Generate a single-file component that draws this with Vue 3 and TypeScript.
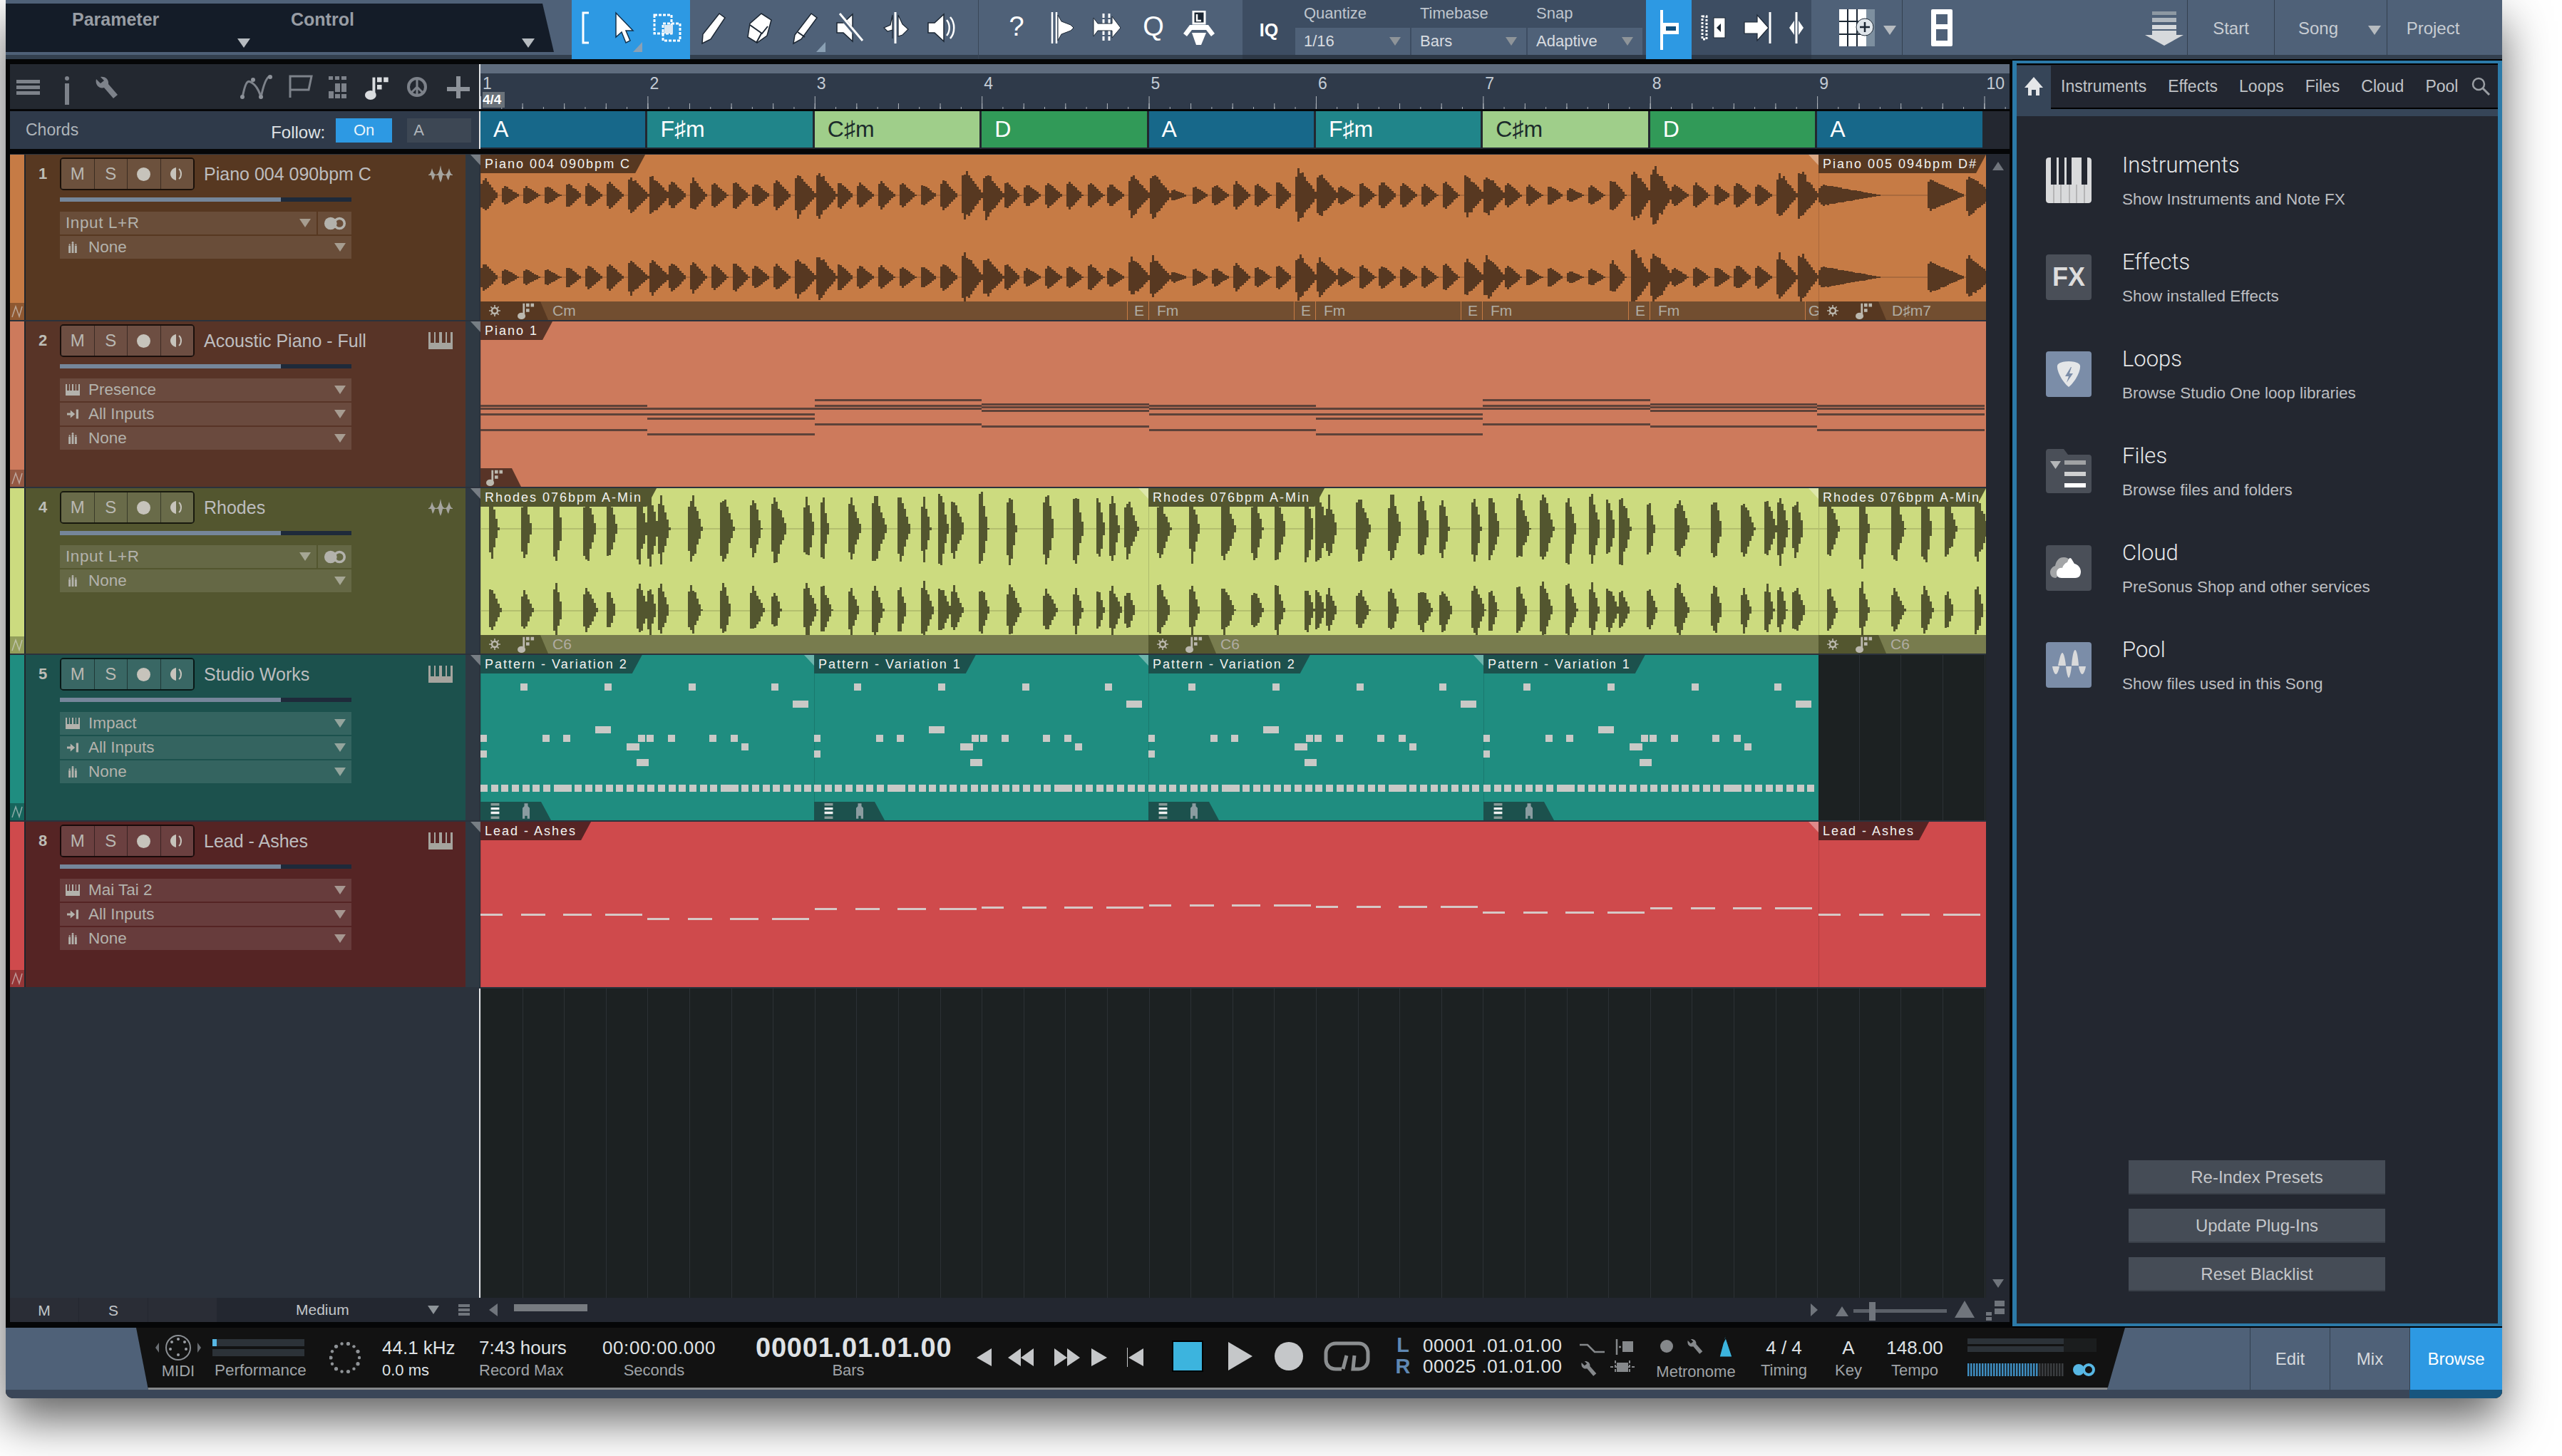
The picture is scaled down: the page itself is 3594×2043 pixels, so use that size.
<template>
  <div class="page">
    <svg class="defs" width="0" height="0">
      <symbol id="ic-wave" viewBox="0 0 34 24">
        <path d="M0 13Q3 13 5 4Q7 13 11 13Q15 13 17 0Q19 13 23 13Q27 13 29 4Q31 13 34 13V14H30Q29 18 28 21Q26 18 25 14H20Q19 20 17 24Q15 20 14 14H9Q8 18 6 21Q5 18 4 14H0z" fill="currentColor" />
      </symbol>
      <symbol id="ic-keys" viewBox="0 0 34 24">
        <path d="M0 0h3v15h5V0h2v15h5V0h4v15h5V0h2v15h5V0h3v24H0z" fill="currentColor" />
      </symbol>
      <symbol id="ic-keys-sm" viewBox="0 0 20 16">
        <path d="M0 0h2v9h3V0h1v9h3V0h2v9h3V0h1v9h3V0h2v16H0z" fill="currentColor" />
      </symbol>
      <symbol id="ic-input" viewBox="0 0 20 20">
        <path d="M0 8h6V3l8 7-8 7v-5H0zM16 2h4v16h-4z" fill="currentColor" />
      </symbol>
      <symbol id="ic-stand" viewBox="0 0 16 22">
        <path d="M6 4h4v18H6zM0 8h4v14H0zM12 8h4v14h-4z" fill="currentColor" />
        <circle cx="8" cy="2" r="2" fill="currentColor" />
        <circle cx="2" cy="6" r="1.5" fill="currentColor" />
        <circle cx="14" cy="6" r="1.5" fill="currentColor" />
      </symbol>
      <symbol id="ic-gear" viewBox="0 0 20 20">
        <circle cx="10" cy="10" r="5" fill="none" stroke="currentColor" stroke-width="3" />
        <path d="M10 0v4M10 16v4M0 10h4M16 10h4M3 3l3 3M14 14l3 3M17 3l-3 3M6 14l-3 3" stroke="currentColor" stroke-width="2" />
      </symbol>
      <symbol id="ic-notefx" viewBox="0 0 26 26">
        <path d="M8 2h3v18H8z" fill="currentColor" />
        <ellipse cx="6" cy="21" rx="6" ry="5" fill="currentColor" />
        <path d="M13 2h5v5h-5zM20 2h5v5h-5zM13 10h5v5h-5z" fill="currentColor" />
      </symbol>
      <symbol id="ic-lines" viewBox="0 0 14 26">
        <path d="M0 0h14v4H0z" fill="#8a9a98" />
        <path d="M0 7h14v4H0zM0 14h14v4H0z" fill="#f0f0f0" />
        <path d="M0 22h14v4H0z" fill="#8a9a98" />
      </symbol>
      <symbol id="ic-ghost" viewBox="0 0 12 26">
        <path d="M0 8l3-3V0h6v5l3 3v18H8v-5H4v5H0z" fill="#8a9ca0" />
      </symbol>
      <symbol id="ic-wrench" viewBox="0 -1 32 31">
        <path d="M1 3l6 6 5-4-5-5c6-1 12 3 11 10l13 15-6 5-13-15C5 17-1 11 1 3z" fill="currentColor" />
      </symbol>
    </svg>

    <div class="window">
      <!-- top toolbar -->
      <div class="toolbar">
        <div class="param-wrap">
          <div class="param">
            <div class="param-col first">
              <span>Parameter</span><i class="tri" />
            </div>
            <div class="param-col second">
              <span>Control</span><i class="tri" />
            </div>
          </div>
        </div>

        <div class="tools-blue">
          <span class="tool t-40">
            <svg viewBox="0 0 24 48"><path d="M16 3H8v42h8" fill="none" stroke="#fff" stroke-width="3" /></svg>
          </span>
          <span class="tool t-62">
            <svg viewBox="0 0 48 48"><path d="M15 3v34l8-7 6 15 6-3-6-14h10z" fill="#fff" stroke="#12324e" stroke-width="1.5" /></svg>
            <i class="corner" />
          </span>
          <span class="tool t-65">
            <svg viewBox="0 0 48 48">
              <rect x="6" y="6" width="24" height="26" fill="none" stroke="#fff" stroke-width="3" stroke-dasharray="4 2" />
              <rect x="18" y="18" width="24" height="24" fill="none" stroke="#fff" stroke-width="3" stroke-dasharray="4 2" />
              <rect x="20" y="20" width="12" height="12" fill="#d8e8f4" />
            </svg>
          </span>
        </div>

        <div class="tools-light first-group">
          <span class="tool">
            <svg viewBox="0 0 48 48"><path d="M33 4l8 6-20 30-12 6 1-13z" fill="#fff" stroke="#1b2633" stroke-width="1.5" /></svg>
          </span>
          <span class="tool">
            <svg viewBox="0 0 48 48">
              <path d="M28 4l14 9-6 22-14 10-13-8 3-19z" fill="#fff" stroke="#1b2633" stroke-width="1.5" />
              <path d="M12 20l17 12 8-10M21 45l7-13" fill="none" stroke="#1b2633" stroke-width="2" />
            </svg>
          </span>
          <span class="tool">
            <svg viewBox="0 0 48 48">
              <path d="M34 4l8 6-22 30-11 6 2-12z" fill="#fff" stroke="#1b2633" stroke-width="1.5" />
              <path d="M15 30l10 7" stroke="#1b2633" stroke-width="2" />
            </svg>
            <i class="corner" />
          </span>
          <span class="tool">
            <svg viewBox="0 0 48 48">
              <path d="M6 17h9L28 5v38L15 31H6z" fill="#fff" stroke="#1b2633" stroke-width="1.5" />
              <path d="M8 4l34 40" stroke="#4f6178" stroke-width="6" />
              <path d="M10 4l32 38" stroke="#fff" stroke-width="3" />
            </svg>
          </span>
          <span class="tool">
            <svg viewBox="0 0 48 48">
              <path d="M24 2v44" stroke="#fff" stroke-width="3" />
              <path d="M20 6l-3 14-9 4 5 5 7-2v12zM28 6l6 13 8 7-8 8-6 2z" fill="#fff" stroke="#1b2633" stroke-width="1.2" />
            </svg>
          </span>
          <span class="tool">
            <svg viewBox="0 0 48 48">
              <path d="M6 17h9L28 5v38L15 31H6z" fill="#fff" stroke="#1b2633" stroke-width="1.5" />
              <path d="M32 13c5 6 5 16 0 22M37 9c7 8 7 22 0 30" fill="none" stroke="#fff" stroke-width="2.5" />
            </svg>
          </span>
        </div>

        <div class="tools-light second-group">
          <span class="tool text-tool">?</span>
          <span class="tool">
            <svg viewBox="0 0 48 48">
              <path d="M10 2v44M16 2v44" stroke="#fff" stroke-width="2.5" />
              <path d="M18 6l5 9 13 5 4 4-4 4-13 5-5 9z" fill="#fff" stroke="#1b2633" stroke-width="1" />
            </svg>
          </span>
          <span class="tool">
            <svg viewBox="0 0 48 48">
              <path d="M18 4v40M26 4v40" stroke="#fff" stroke-width="3" stroke-dasharray="6 2" />
              <path d="M4 10l6 8h20V8l12 16-12 14V28H10l-6 8z" fill="#fff" stroke="#1b2633" stroke-width="1" />
            </svg>
          </span>
          <span class="tool text-tool q">Q</span>
          <span class="tool">
            <svg viewBox="0 0 48 48">
              <rect x="16" y="1" width="16" height="17" fill="#1b2633" stroke="#fff" stroke-width="3" />
              <path d="M21 5v9h6" fill="none" stroke="#fff" stroke-width="2.5" />
              <path d="M2 32l9-12h26l9 12-5 4-7-9H14l-7 9z" fill="#fff" />
              <path d="M14 31h20l-7 17h-7z" fill="#fff" />
            </svg>
          </span>
        </div>

        <div class="tools-dark">
          <span class="iq">IQ</span>
          <div v-for="q in quantize" :key="q.label" class="qs-col">
            <div class="qs-label">{{ q.label }}</div>
            <div class="qs-select">
              <span>{{ q.value }}</span><i class="tri sm" />
            </div>
          </div>
          <span class="snap-btn">
            <svg viewBox="0 0 40 60">
              <path d="M10 2v56" stroke="#fff" stroke-width="4" />
              <rect x="12" y="20" width="22" height="16" fill="#fff" />
              <rect x="16" y="25" width="14" height="6" fill="#12507e" />
            </svg>
          </span>
          <span class="tool t-62 after-snap">
            <svg viewBox="0 0 48 48">
              <path d="M8 8h6v32H8z" fill="none" stroke="#fff" stroke-width="3" stroke-dasharray="3 2" />
              <rect x="24" y="10" width="16" height="28" fill="#fff" stroke="#1b2633" />
              <path d="M34 18l-6 6 6 6z" fill="#1b2633" />
            </svg>
          </span>
          <span class="tool t-66">
            <svg viewBox="0 0 48 48">
              <path d="M4 16h18V6l16 18-16 18V32H4z" fill="#fff" stroke="#1b2633" stroke-width="1.2" />
              <path d="M40 2v44" stroke="#fff" stroke-width="3" />
            </svg>
          </span>
          <span class="tool t-40">
            <svg viewBox="0 0 24 48">
              <path d="M12 2v44" stroke="#fff" stroke-width="3" />
              <path d="M9 14L2 24l7 10zM15 14l7 10-7 10z" fill="#fff" />
            </svg>
          </span>
        </div>

        <div class="tools-right">
          <span class="tool layout-btn">
            <svg viewBox="0 0 56 56">
              <path d="M2 2h38v52H2z" fill="#fff" />
              <path d="M14 2v52M27 2v52M2 19h38M2 37h38" stroke="#1b2633" stroke-width="2" />
              <path d="M40 2h12v52H40z" fill="#7d8f9f" />
              <circle cx="38" cy="27" r="12" fill="#dfe5ea" stroke="#1b2633" />
              <path d="M38 20v14M31 27h14" stroke="#1b2633" stroke-width="2.5" />
            </svg>
          </span>
          <i class="tri layout-tri" />
          <span class="sep" />
          <span class="tool chan-btn">
            <svg viewBox="0 0 34 56">
              <rect x="2" y="2" width="30" height="52" rx="2" fill="#fff" />
              <rect x="9" y="9" width="16" height="14" fill="#4f6178" />
              <rect x="9" y="30" width="16" height="16" fill="#4f6178" />
            </svg>
          </span>
          <span class="tool dl-btn">
            <svg viewBox="0 0 54 50">
              <path d="M10 2h34v5H10z" fill="#8d98a3" />
              <path d="M10 11h34v6H10z" fill="#aeb6be" />
              <path d="M10 21h34v6H10zM10 29h34v6h10L27 50 0 35h10z" fill="#d6d9dc" />
            </svg>
          </span>
          <span class="sep" />
          <span class="nav-text start">Start</span>
          <span class="sep" />
          <span class="nav-text song">Song</span><i class="tri song-tri" />
          <span class="sep" />
          <span class="nav-text project">Project</span>
        </div>
      </div>

      <div class="workspace">
        <!-- arrangement -->
        <div class="arrange">
          <div class="arr-head">
            <div class="head-tools">
              <svg class="head-icons" viewBox="0 0 658 63">
                <g fill="#7d828a">
                  <rect x="9" y="22" width="33" height="5" />
                  <rect x="9" y="30" width="33" height="5" />
                  <rect x="9" y="38" width="33" height="5" />
                  <rect x="77" y="27" width="6" height="30" />
                  <circle cx="80" cy="20" r="3" />
                </g>
                <use href="#ic-wrench" x="120" y="17" width="32" height="31" color="#7d828a" />
                <path d="M326 47c5-26 8-26 17-18 4 4 8 12 9 18 4-20 8-28 12-30" fill="none" stroke="#7d828a" stroke-width="3" />
                <g fill="#8d9299"><circle cx="326" cy="46" r="3" /><circle cx="341" cy="22" r="3" /><circle cx="352" cy="46" r="3" /><circle cx="365" cy="18" r="3" /></g>
                <path d="M393 47V17h30l-4 19h-26" fill="none" stroke="#7d828a" stroke-width="3" />
                <path d="M447 17h6v5h-6zM456 17h6v5h-6zM465 17h7v5h-7zM456 27h7v12h-7zM465 27h7v12h-7zM447 38h7v10h-7zM456 42h7v6h-7zM465 42h7v6h-7z" fill="#7d828a" />
                <use href="#ic-notefx" x="498" y="16" width="34" height="34" color="#d9dcdf" />
                <circle cx="571" cy="32" r="12" fill="none" stroke="#7d828a" stroke-width="4" />
                <path d="M571 20v24M571 32l-8 8M571 32l8 8" stroke="#7d828a" stroke-width="3" />
                <path d="M626 17h6v15h13v6h-13v10h-6V38h-13v-6h13z" fill="#8d9299" />
              </svg>
            </div>
            <div class="ruler">
              <div class="ruler-strip" />
              <div class="ruler-body">
                <span class="timesig">4/4</span>
                <span v-for="n in 10" :key="n" class="bar-num">{{ n }}</span>
              </div>
            </div>
          </div>

          <div class="chord-row">
            <div class="chord-label">
              <span class="chords-title">Chords</span>
              <span class="follow">Follow:</span>
              <span class="on-btn">On</span>
              <span class="a-btn">A</span>
            </div>
            <div class="chord-lane">
              <div
                v-for="(c, i) in chords"
                :key="i"
                class="chord"
                :style="{ background: chordColors[c].bg, color: chordColors[c].fg }"
              >
                {{ c }}
              </div>
            </div>
          </div>

          <div class="track-area">
            <div v-for="t in tracks" :key="t.num" class="track-row">
              <div class="track-head" :style="{ background: t.body }">
                <div class="strip" :style="{ background: t.color }">
                  <span class="auto-btn">
                    <svg viewBox="0 0 20 24"><path d="M3 20L8 5l5 14 4-14" fill="none" stroke="#d8d8d8" stroke-opacity=".6" stroke-width="1.5" /></svg>
                  </span>
                </div>
                <div class="track-main">
                  <div class="track-top">
                    <span class="track-num">{{ t.num }}</span>
                    <div class="msrm">
                      <span class="msr-btn">M</span>
                      <span class="msr-btn">S</span>
                      <span class="msr-btn"><i class="rec-dot" /></span>
                      <span class="msr-btn">
                        <svg viewBox="0 0 20 20" class="mon"><path d="M9 1C4 2 1 6 1 10s3 8 8 9z" fill="currentColor" /><path d="M13 3c4 3 4 11 0 14" fill="none" stroke="currentColor" stroke-width="2" /></svg>
                      </span>
                    </div>
                    <span class="track-name">{{ t.name }}</span>
                    <svg class="track-type"><use :href="t.audio ? '#ic-wave' : '#ic-keys'" /></svg>
                  </div>
                  <div class="fader"><div class="fader-fill" /></div>
                  <div class="selects">
                    <div v-for="s in t.selects" :key="s.label" class="select-row">
                      <div class="select" :class="{ toggled: s.toggle }">
                        <svg v-if="s.icon" class="sel-icon"><use :href="s.icon" /></svg>
                        <span class="sel-text" :class="{ noicon: !s.icon }">{{ s.label }}</span>
                        <i class="tri sm" />
                      </div>
                      <div v-if="s.toggle" class="sel-toggle">
                        <svg viewBox="0 0 36 26"><circle cx="11" cy="13" r="10" fill="currentColor" /><circle cx="25" cy="13" r="8" fill="none" stroke="currentColor" stroke-width="4" /></svg>
                      </div>
                    </div>
                  </div>
                </div>
                <div class="track-side" />
              </div>

              <div class="lane">
                <div
                  v-for="(c, i) in t.clips"
                  :key="i"
                  class="clip"
                  :style="{ left: c.x + 'px', width: c.w + 'px', background: t.color }"
                >
                  <i class="clip-fade" />
                  <svg v-if="c.wave" class="clip-wave" :viewBox="`0 0 ${c.w} 232`" :width="c.w" height="232">
                    <rect x="0" y="56" :width="c.w" height="2" :fill="t.waveBase" />
                    <rect x="0" y="171" :width="c.w" height="2" :fill="t.waveBase" />
                    <path :d="c.wave" :fill="t.body" />
                  </svg>
                  <i
                    v-for="(n, k) in c.notes"
                    :key="k"
                    class="note"
                    :style="{ left: n.x + 'px', top: n.y + 'px', width: n.w + 'px', height: n.h + 'px', background: t.noteColor }"
                  />
                  <div v-if="c.label" class="clip-label" :style="{ background: t.body }">{{ c.label }}</div>
                  <div v-if="c.footBar" class="foot-bar" :style="{ background: t.foot }">
                    <template v-for="(m, k) in c.marks" :key="k">
                      <i v-if="m.line" class="foot-line" :style="{ left: m.x + 'px', background: t.color }" />
                      <span v-else class="foot-text" :style="{ left: m.x + 'px' }">{{ m.text }}</span>
                    </template>
                  </div>
                  <div v-if="c.footTab" class="foot-tab" :class="c.footTab" :style="{ background: t.body }">
                    <template v-if="c.footTab === 'gear'">
                      <svg class="ft-gear"><use href="#ic-gear" /></svg>
                      <svg class="ft-note"><use href="#ic-notefx" /></svg>
                    </template>
                    <svg v-else-if="c.footTab === 'note'" class="ft-note"><use href="#ic-notefx" /></svg>
                    <template v-else>
                      <svg class="ft-lines"><use href="#ic-lines" /></svg>
                      <svg class="ft-ghost"><use href="#ic-ghost" /></svg>
                    </template>
                  </div>
                </div>
              </div>
            </div>

            <div class="empty-row">
              <div class="empty-left" />
              <div class="empty-lane" />
            </div>

            <i class="scroll-up" />
            <i class="scroll-down" />
          </div>

          <div class="arr-foot">
            <div class="foot-left">
              <span class="foot-cell">M</span>
              <span class="foot-cell">S</span>
              <span class="foot-cell" />
              <span class="medium">Medium</span>
              <i class="tri sm medium-tri" />
              <span class="stack"><i /><i /><i /></span>
            </div>
            <div class="foot-right">
              <i class="left-tri" />
              <span class="thumb" />
              <i class="right-tri" />
              <svg class="zoom-widget" viewBox="0 0 252 34">
                <path d="M8 26l9-14 9 14z" fill="#70757c" />
                <rect x="33" y="16" width="131" height="5" fill="#5b6068" />
                <rect x="55" y="6" width="9" height="26" fill="#70757c" />
                <path d="M175 28l14-24 14 24z" fill="#70757c" />
                <rect x="231" y="4" width="14" height="8" fill="#70757c" />
                <rect x="231" y="15" width="14" height="8" fill="#70757c" />
                <rect x="219" y="20" width="8" height="5" fill="#70757c" />
                <rect x="219" y="27" width="8" height="5" fill="#70757c" />
              </svg>
            </div>
          </div>
        </div>

        <!-- browser panel -->
        <div class="browser">
          <div class="br-tabs">
            <span class="br-home">
              <svg viewBox="0 0 26 26"><path d="M13 0l13 15h-5v11h-5v-8h-6v8H5V15H0z" fill="#e4e6e8" /></svg>
            </span>
            <div class="br-tab-row">
              <span v-for="tab in browserTabs" :key="tab" class="br-tab">{{ tab }}</span>
              <svg class="br-search" viewBox="0 0 28 26">
                <circle cx="11" cy="10" r="8" fill="none" stroke="#9a9ea3" stroke-width="2.5" />
                <path d="M17 16l9 9" stroke="#9a9ea3" stroke-width="3" />
              </svg>
            </div>
          </div>

          <div class="br-list">
            <div v-for="item in browserItems" :key="item.title" class="br-item">
              <div class="br-icon" :class="item.kind">
                <template v-if="item.kind === 'keys'">
                  <svg viewBox="0 0 64 64">
                    <rect width="64" height="64" rx="4" fill="#d9dadb" />
                    <path d="M11 38v26M21 38v26M33 38v26M43 38v26M54 38v26" stroke="#a8a9aa" stroke-width="1.5" />
                    <path d="M7 0h8v38H7zM18 0h8v38h-8zM29 0h7v38h-7zM50 0h8v38h-8z" fill="#232730" />
                  </svg>
                </template>
                <template v-else-if="item.kind === 'fx'">FX</template>
                <template v-else-if="item.kind === 'loops'">
                  <svg viewBox="0 0 64 64">
                    <path d="M32 14c-8 0-15 2-16 6-1 10 10 26 16 30 6-4 17-20 16-30-1-4-8-6-16-6z" fill="#e4e6e8" />
                    <path d="M35 22l-8 13h5l-3 9 9-13h-5l3-9z" fill="#7b8da8" />
                  </svg>
                </template>
                <template v-else-if="item.kind === 'files'">
                  <svg viewBox="0 0 64 62">
                    <path d="M4 0h21l6 8h29a4 4 0 0 1 4 4v46a4 4 0 0 1-4 4H4a4 4 0 0 1-4-4V4a4 4 0 0 1 4-4z" fill="#4a4f58" />
                    <path d="M6 17h15l-7.5 11z" fill="#b4b6b8" />
                    <rect x="26" y="16" width="30" height="6" fill="#a0a2a4" />
                    <rect x="26" y="32" width="30" height="6" fill="#cfd0d1" />
                    <rect x="26" y="48" width="30" height="6" fill="#fff" />
                  </svg>
                </template>
                <template v-else-if="item.kind === 'cloud'">
                  <svg viewBox="0 0 64 64">
                    <path d="M14 46c-6 0-8-4-8-8s3-8 7-9c1-6 5-13 13-12 5 0 8 4 9 8z" fill="#a3a5a7" />
                    <path d="M22 46c-5 0-7-3-7-7 0-5 4-8 8-7 1-4 4-7 7-8 1-2 2-6 4-6s4 5 6 8c5 1 9 6 9 11s-2 9-8 9z" fill="#fff" />
                  </svg>
                </template>
                <template v-else>
                  <svg viewBox="0 0 64 64">
                    <path d="M17 33c2-10 4-18 6-18s4 8 5 18z" fill="#d9dadb" />
                    <path d="M36 33c1-14 3-22 5-22s4 8 5 22z" fill="#d9dadb" />
                    <path d="M9 34c1 6 3 11 5 11s4-5 5-11zM28 34c1 10 3 16 4 16s3-6 4-16zM46 34c1 6 3 11 5 11s4-5 5-11z" fill="#d9dadb" />
                  </svg>
                </template>
              </div>
              <div class="br-text">
                <div class="br-title">{{ item.title }}</div>
                <div class="br-desc">{{ item.desc }}</div>
              </div>
            </div>
          </div>

          <div class="br-buttons">
            <button v-for="b in browserButtons" :key="b" class="br-btn">{{ b }}</button>
          </div>
        </div>
      </div>

      <!-- transport -->
      <div class="transport">
        <div class="tp-black">
          <div class="tp midi">
            <svg viewBox="0 0 64 52" class="midi-ic">
              <path d="M0 28l5-7v14zM64 28l-5-7v14z" fill="#6b6f74" />
              <circle cx="32" cy="28" r="17" fill="none" stroke="#8a8e93" stroke-width="2" />
              <g fill="#9a9ea3"><circle cx="32" cy="16" r="2" /><circle cx="23" cy="20" r="2" /><circle cx="41" cy="20" r="2" /><circle cx="21" cy="30" r="2" /><circle cx="43" cy="30" r="2" /><circle cx="32" cy="38" r="2" /></g>
            </svg>
            <div class="lab">MIDI</div>
          </div>
          <div class="tp perf">
            <div class="perf-bars">
              <div class="perf-bar first"><i /></div>
              <div class="perf-bar" />
            </div>
            <div class="lab">Performance</div>
          </div>
          <svg class="tp spinner" viewBox="0 0 44 44">
            <circle v-for="(d, i) in spinnerDots" :key="i" :cx="d.x" :cy="d.y" :r="d.r" fill="#8e9296" />
          </svg>
          <div class="tp sr">
            <div class="val">44.1 kHz</div>
            <div class="lab bright">0.0 ms</div>
          </div>
          <div class="tp rec">
            <div class="val">7:43 hours</div>
            <div class="lab">Record Max</div>
          </div>
          <div class="tp sec">
            <div class="val">00:00:00.000</div>
            <div class="lab center">Seconds</div>
          </div>
          <div class="tp bars">
            <div class="val big">00001.01.01.00</div>
            <div class="lab center">Bars</div>
          </div>

          <svg class="tp controls" viewBox="0 0 590 84">
            <g fill="#c5c7c9">
              <path d="M10 42l21-13v25z" />
              <path d="M54 42l18-13v25zM72 42l18-13v25z" />
              <path d="M119 29l18 13-18 12zM137 29l18 13-18 12z" />
              <path d="M171 29l22 13-22 12z" />
              <rect x="221" y="28" width="1" height="27" />
              <path d="M223 42l21-13v25z" />
              <path d="M363 20l34 20-34 20z" />
              <circle cx="448" cy="40" r="20" />
            </g>
            <rect x="285" y="19" width="42" height="42" fill="#3cb4de" stroke="#000" stroke-width="2" />
            <path d="M522 58h-8c-9 0-14-6-14-13v-9c0-8 6-14 14-14h32c8 0 13 6 13 14v9c0 7-5 13-13 13h-8l2-19M524 58l5-19" fill="none" stroke="#8b8e90" stroke-width="5" />
          </svg>
          <div class="tp lr">
            <span class="lr-l">L</span>
            <span class="lr-r">R</span>
          </div>
          <div class="tp times">
            <span>00001 .01.01.00</span>
            <span>00025 .01.01.00</span>
          </div>
          <svg class="tp met" viewBox="0 0 225 84">
            <g fill="none" stroke="#85888b" stroke-width="2.5">
              <path d="M1 24h11l10 10h14" />
              <path d="M53 16v22M56 27h3" />
            </g>
            <rect x="61" y="19" width="15" height="15" fill="#85888b" />
            <circle cx="123" cy="26" r="9" fill="#85888b" />
            <use href="#ic-wrench" x="152" y="15" width="22" height="22" color="#85888b" />
            <use href="#ic-wrench" x="3" y="46" width="22" height="22" color="#85888b" />
            <path d="M51 46v18M71 46v18M44 55h34" stroke="#85888b" stroke-width="2" stroke-dasharray="4 2" />
            <rect x="53" y="49" width="16" height="13" fill="#85888b" />
            <path d="M205 11l-8 30h18zM195 36l12-24" fill="#3cb4de" stroke="#121212" stroke-width="1.2" />
            <text x="164" y="69" text-anchor="middle" class="met-label">Metronome</text>
          </svg>
          <div class="tp timing">
            <div class="val center">4 / 4</div>
            <div class="lab center">Timing</div>
          </div>
          <div class="tp key">
            <div class="val center">A</div>
            <div class="lab center">Key</div>
          </div>
          <div class="tp tempo">
            <div class="val center">148.00</div>
            <div class="lab center">Tempo</div>
          </div>
          <svg class="tp meters" viewBox="0 0 181 84">
            <rect x="0" y="15" width="135" height="8" fill="#2c3238" />
            <rect x="0" y="26" width="135" height="8" fill="#2c3238" />
            <rect x="135" y="15" width="46" height="19" fill="#1b1d1e" />
            <rect v-for="i in 34" :key="i" :x="(i - 1) * 4" y="50" width="2.5" height="18" :fill="i < 26 ? '#3f8ec2' : '#3a3d40'" />
            <circle cx="156" cy="59" r="8" fill="#57b7e4" />
            <circle cx="170" cy="59" r="7" fill="#121212" stroke="#57b7e4" stroke-width="4" />
          </svg>
        </div>

        <div class="tp-tabs">
          <span class="tp-tab">Edit</span>
          <span class="tp-tab">Mix</span>
          <span class="tp-tab active">Browse</span>
        </div>
      </div>
    </div>
  </div>
</template>

<script setup lang="ts">
interface Note {
  x: number
  y: number
  w: number
  h: number
}

interface Mark {
  x: number
  text?: string
  line?: boolean
}

interface Clip {
  x: number
  w: number
  label?: string
  wave?: string
  notes?: Note[]
  footBar?: boolean
  marks?: Mark[]
  footTab?: 'gear' | 'note' | 'pattern'
}

interface SelectItem {
  label: string
  icon?: string
  toggle?: boolean
}

interface Track {
  num: number
  name: string
  audio: boolean
  color: string
  body: string
  foot: string
  waveBase: string
  noteColor: string
  selects: SelectItem[]
  clips: Clip[]
}

const BAR = 234.4
const EIGHTH = BAR / 8

const quantize = [
  { label: 'Quantize', value: '1/16' },
  { label: 'Timebase', value: 'Bars' },
  { label: 'Snap', value: 'Adaptive' },
]

const chords = ['A', 'F♯m', 'C♯m', 'D', 'A', 'F♯m', 'C♯m', 'D', 'A']
const chordColors: Record<string, { bg: string; fg: string }> = {
  A: { bg: '#17688a', fg: '#fff' },
  'F♯m': { bg: '#20858a', fg: '#fff' },
  'C♯m': { bg: '#9fce8a', fg: '#1c2b2b' },
  D: { bg: '#319a58', fg: '#fff' },
}

const browserTabs = ['Instruments', 'Effects', 'Loops', 'Files', 'Cloud', 'Pool']
const browserItems = [
  { kind: 'keys', title: 'Instruments', desc: 'Show Instruments and Note FX' },
  { kind: 'fx', title: 'Effects', desc: 'Show installed Effects' },
  { kind: 'loops', title: 'Loops', desc: 'Browse Studio One loop libraries' },
  { kind: 'files', title: 'Files', desc: 'Browse files and folders' },
  { kind: 'cloud', title: 'Cloud', desc: 'PreSonus Shop and other services' },
  { kind: 'pool', title: 'Pool', desc: 'Show files used in this Song' },
]
const browserButtons = ['Re-Index Presets', 'Update Plug-Ins', 'Reset Blacklist']

const spinnerDots = Array.from({ length: 14 }, (_, i) => {
  const a = (i / 14) * Math.PI * 2
  return { x: 22 + Math.cos(a) * 20, y: 22 + Math.sin(a) * 20, r: i % 2 ? 2.6 : 2.2 }
})

function makeRng(seed: number) {
  let s = seed
  return () => {
    s = (s * 16807) % 2147483647
    return s / 2147483647
  }
}

interface Onset {
  x: number
  a: number
  len: number
}

// one channel of a blocky waveform, drawn as a stepped closed path
function channel(onsets: Onset[], width: number, center: number, seed: number): string {
  const rnd = makeRng(seed)
  const step = 3
  const top: string[] = []
  const bottom: string[] = []
  for (let x = 0; x < width; x += step) {
    let amp = 0
    for (const o of onsets) {
      const d = x - o.x
      if (d < 0) continue
      const v = d < 4 ? o.a * (0.7 + d * 0.07) : o.a * Math.max(0, 1 - (d - 4) / o.len)
      if (v > amp) amp = v
    }
    const jit = amp > 22 ? 0.82 + rnd() * 0.3 : 0.94 + rnd() * 0.1
    const up = Math.round(amp * jit)
    const dn = Math.round(amp * (amp > 22 ? 0.82 + rnd() * 0.3 : 0.94 + rnd() * 0.1))
    top.push(`L${x} ${center - up}L${x + step} ${center - up}`)
    bottom.unshift(`L${x + step} ${center + dn}L${x} ${center + dn}`)
  }
  return `M0 ${center}${top.join('')}${bottom.join('')}Z`
}

const pianoAmps = [
  25, 14, 13, 13, 18, 17, 20, 27, 28, 20, 23, 18, 20, 17, 22, 30, 33, 20, 18, 20, 18, 15, 22, 35, 33, 20, 16, 18, 20,
  18, 16, 30, 33, 8, 13, 15, 20, 17, 20, 38, 32, 14, 18, 20, 18, 16, 20, 32, 30, 18, 15, 14, 10, 14, 24, 40, 42, 16, 18,
  15, 18, 16, 32, 36,
]

function pianoWave(): string {
  const rnd = makeRng(77)
  const top = pianoAmps.map((a, i) => ({ x: i * EIGHTH, a, len: a > 26 ? 27 : 20 }))
  const low = pianoAmps.map((a, i) => ({ x: i * EIGHTH, a: a * (0.82 + rnd() * 0.25), len: a > 26 ? 27 : 20 }))
  return channel(top, 1877, 57, 11) + channel(low, 1877, 172, 23)
}

function pianoWave2(): string {
  const o: Onset[] = [
    { x: 0, a: 15, len: 84 },
    { x: 151, a: 22, len: 50 },
    { x: 205, a: 30, len: 36 },
  ]
  return channel(o, 235, 57, 31) + channel(o, 235, 172, 37)
}

const rhodesHits = [
  14, 60, 105, 148, 179, 221, 236, 252, 295, 340, 382, 412, 457, 479, 518, 552, 587, 621, 644, 662, 701, 742, 793, 834,
  866, 885, 907,
]

function rhodesWave(width: number, seed: number): string {
  const rnd = makeRng(seed)
  const top = rhodesHits
    .filter((x) => x < width)
    .map((x) => ({ x: x - 4, a: 42 + rnd() * 12, len: 8 + rnd() * 9 }))
  const low = rhodesHits
    .filter((x) => x < width)
    .map((x) => ({ x: x - 4, a: 28 + rnd() * 12, len: 8 + rnd() * 8 }))
  return channel(top, width, 57, seed + 1) + channel(low, width, 171, seed + 2)
}

function pianoMarks(): Mark[] {
  const marks: Mark[] = [{ x: 101, text: 'Cm' }]
  const starts = [907, 1141, 1375, 1610]
  for (const s of starts) {
    marks.push({ x: s, line: true }, { x: s + 10, text: 'E' }, { x: s + 30, line: true }, { x: s + 42, text: 'Fm' })
  }
  marks.push({ x: 1858, line: true }, { x: 1863, text: 'G' })
  return marks
}

const keyBars = [
  [117, 121, 129, 151],
  [121, 129, 135, 157],
  [109, 117, 121, 143],
  [115, 119, 124, 146],
]

function keyNotes(): Note[] {
  const notes: Note[] = []
  for (let b = 0; b < 9; b++) {
    for (const y of keyBars[b % 4]) notes.push({ x: b * BAR, y, w: BAR, h: 3 })
  }
  return notes
}

const patternRows: [number, number, number][] = [
  [40, 56, 10],
  [40, 174, 10],
  [40, 292, 10],
  [40, 408, 10],
  [64, 438, 22],
  [100, 161, 22],
  [112, 0, 9],
  [112, 87, 10],
  [112, 116, 10],
  [112, 221, 10],
  [112, 233, 10],
  [112, 263, 10],
  [112, 321, 10],
  [112, 351, 10],
  [124, 205, 18],
  [124, 366, 10],
  [134, 0, 9],
  [146, 219, 17],
]

function patternNotes(): Note[] {
  const notes: Note[] = patternRows.map(([y, x, w]) => ({ x, y, w, h: 10 }))
  for (let i = 0; i < 32; i++) {
    if (i === 8 || i === 24) continue
    const wide = i === 7 || i === 23
    notes.push({ x: Math.round(i * 14.65), y: 182, w: wide ? 25 : 10, h: 10 })
  }
  return notes
}

const leadY = [129, 135, 121, 119, 116, 118, 126, 120]
const leadSeg = [
  [0, 31],
  [57, 34],
  [116, 40],
  [175, 52],
]

function leadNotes(): Note[] {
  const notes: Note[] = []
  leadY.forEach((y, b) => {
    for (const [x, w] of leadSeg) notes.push({ x: Math.round(b * BAR + x), y, w, h: 3 })
  })
  return notes
}

const lead2: Note[] = leadSeg.map(([x, w]) => ({ x, y: 129, w, h: 3 }))

const audioSelects: SelectItem[] = [
  { label: 'Input L+R', toggle: true },
  { label: 'None', icon: '#ic-stand' },
]

const instSelects = (name: string): SelectItem[] => [
  { label: name, icon: '#ic-keys-sm' },
  { label: 'All Inputs', icon: '#ic-input' },
  { label: 'None', icon: '#ic-stand' },
]

const tracks: Track[] = [
  {
    num: 1,
    name: 'Piano 004 090bpm C',
    audio: true,
    color: '#c67b45',
    body: '#573821',
    foot: '#724e30',
    waveBase: '#a96a3d',
    noteColor: '#000',
    selects: audioSelects,
    clips: [
      {
        x: 0,
        w: 1877,
        label: 'Piano 004 090bpm C',
        wave: pianoWave(),
        footBar: true,
        footTab: 'gear',
        marks: pianoMarks(),
      },
      {
        x: 1877,
        w: 235,
        label: 'Piano 005 094bpm D#',
        wave: pianoWave2(),
        footBar: true,
        footTab: 'gear',
        marks: [{ x: 103, text: 'D♯m7' }],
      },
    ],
  },
  {
    num: 2,
    name: 'Acoustic Piano - Full',
    audio: false,
    color: '#cd7a5c',
    body: '#583427',
    foot: '#724e30',
    waveBase: '#000',
    noteColor: '#5d4239',
    selects: instSelects('Presence'),
    clips: [{ x: 0, w: 2112, label: 'Piano 1', notes: keyNotes(), footTab: 'note' }],
  },
  {
    num: 4,
    name: 'Rhodes',
    audio: true,
    color: '#ccdb7f',
    body: '#53562f',
    foot: '#787c4e',
    waveBase: '#b3bf6e',
    noteColor: '#000',
    selects: audioSelects,
    clips: [0, 937, 1877].map((x, i) => ({
      x,
      w: i === 2 ? 235 : i === 1 ? 940 : 937,
      label: 'Rhodes 076bpm A-Min',
      wave: rhodesWave(i === 2 ? 235 : 937, 101 + i * 13),
      footBar: true,
      footTab: 'gear' as const,
      marks: [{ x: 101, text: 'C6' }],
    })),
  },
  {
    num: 5,
    name: 'Studio Works',
    audio: false,
    color: '#1f8d80',
    body: '#1c514d',
    foot: '#08393a',
    waveBase: '#000',
    noteColor: '#c9c9c6',
    selects: instSelects('Impact'),
    clips: [
      { x: 0, w: 468, label: 'Pattern - Variation 2', notes: patternNotes(), footTab: 'pattern' },
      { x: 468, w: 469, label: 'Pattern - Variation 1', notes: patternNotes(), footTab: 'pattern' },
      { x: 937, w: 470, label: 'Pattern - Variation 2', notes: patternNotes(), footTab: 'pattern' },
      { x: 1407, w: 470, label: 'Pattern - Variation 1', notes: patternNotes(), footTab: 'pattern' },
    ],
  },
  {
    num: 8,
    name: 'Lead - Ashes',
    audio: false,
    color: '#cf4a4c',
    body: '#552424',
    foot: '#552424',
    waveBase: '#000',
    noteColor: '#d6c8c6',
    selects: instSelects('Mai Tai 2'),
    clips: [
      { x: 0, w: 1877, label: 'Lead - Ashes', notes: leadNotes() },
      { x: 1877, w: 235, label: 'Lead - Ashes', notes: lead2 },
    ],
  },
]
</script>

<style scoped>
.page {
  width: 3594px;
  height: 2043px;
  padding-left: 8px;
  box-sizing: border-box;
  background: #fff;
  overflow: hidden;
  font-family: 'Liberation Sans', Arial, sans-serif;
}

.defs {
  position: absolute;
}

.window {
  width: 3502px;
  height: 1962px;
  display: flex;
  flex-direction: column;
  background: #000;
  border-radius: 0 0 10px 10px;
  box-shadow: 0 30px 66px rgba(0, 0, 0, 0.62);
  overflow: visible;
}

.tri {
  display: block;
  width: 0;
  height: 0;
  border-left: 9px solid transparent;
  border-right: 9px solid transparent;
  border-top: 13px solid #b6bbc0;
}

.tri.sm {
  border-left-width: 8px;
  border-right-width: 8px;
  border-top: 12px solid #8e9499;
}

/* toolbar */
.toolbar {
  height: 83px;
  flex: none;
  display: flex;
  background: #4f6178;
  color: #c8cdd3;
}

.param-wrap {
  width: 794px;
  flex: none;
  padding-top: 5px;
  box-sizing: border-box;
  height: 83px;
  box-shadow: inset 0 -6px 0 #33404f;
}

.param {
  width: 769px;
  height: 68px;
  display: flex;
  background: #141c28;
  clip-path: polygon(0 0, 753px 0, 769px 100%, 0 100%);
}

.param-col {
  display: flex;
  flex-direction: column;
  font-size: 25px;
  font-weight: 700;
  color: #989da4;
  box-sizing: border-box;
  position: relative;
  height: 68px;
}

.param-col span {
  margin-top: 8px;
}

.param-col .tri {
  margin-top: 12px;
  align-self: flex-end;
}

.param-col.first {
  width: 343px;
  padding-left: 93px;
}

.param-col.second {
  width: 399px;
  padding-left: 57px;
}

.tools-blue {
  width: 166px;
  flex: none;
  display: flex;
  background: #2d99e3;
}

.tool {
  width: 64px;
  height: 83px;
  flex: none;
  display: flex;
  align-items: center;
  justify-content: center;
  position: relative;
  box-sizing: border-box;
  padding-bottom: 5px;
}

.tool svg {
  height: 48px;
  width: 48px;
}

.tool.t-40 {
  width: 40px;
}

.tool.t-40 svg {
  width: 24px;
}

.tool.t-62 {
  width: 61px;
}

.tool.t-65 {
  width: 65px;
}

.tool.t-66 {
  width: 66px;
}

.corner {
  position: absolute;
  right: 2px;
  bottom: 10px;
  width: 13px;
  height: 14px;
  background: #8aa0b4;
  clip-path: polygon(100% 0, 100% 100%, 0 100%);
}

.tools-light {
  flex: none;
  display: flex;
  height: 83px;
  box-sizing: border-box;
  box-shadow: inset 0 -6px 0 #33404f;
}

.first-group {
  width: 405px;
  border-right: 1px solid #3a4758;
}

.second-group {
  width: 370px;
  padding-left: 21px;
}

.text-tool {
  font-size: 38px;
  color: #fff;
  padding-bottom: 8px;
}

.text-tool.q {
  font-size: 38px;
  font-weight: 400;
}

.tools-dark {
  width: 798px;
  flex: none;
  display: flex;
  background: #3d4d62;
  box-shadow: inset 0 -6px 0 #2d3846;
}

.iq {
  width: 74px;
  flex: none;
  text-align: center;
  font-size: 25px;
  font-weight: 700;
  color: #fff;
  line-height: 84px;
}

.qs-col {
  width: 161px;
  margin-right: 2px;
  flex: none;
}

.qs-label {
  height: 39px;
  line-height: 37px;
  font-size: 22px;
  padding-left: 12px;
  color: #bfc6ce;
}

.qs-select {
  height: 38px;
  background: #4f6178;
  display: flex;
  align-items: center;
  justify-content: space-between;
  padding: 0 13px 0 12px;
  font-size: 22px;
  color: #d8dce0;
}

.snap-btn {
  width: 64px;
  margin-left: 3px;
  height: 83px;
  flex: none;
  background: #2d99e3;
  display: flex;
  align-items: center;
  justify-content: center;
}

.snap-btn svg {
  width: 40px;
  height: 60px;
}

.tools-right {
  flex: 1;
  display: flex;
  align-items: stretch;
  box-shadow: inset 0 -6px 0 #33404f;
}

.layout-btn {
  margin-left: 33px;
}

.layout-btn svg {
  width: 56px;
  height: 56px;
}

.layout-tri {
  margin: 36px 8px 0 4px;
}

.sep {
  width: 1px;
  background: #33404f;
  flex: none;
}

.chan-btn {
  margin-left: 23px;
}

.chan-btn svg {
  width: 34px;
  height: 56px;
}

.dl-btn {
  margin-left: 248px;
  margin-right: 0;
}

.dl-btn svg {
  width: 54px;
  height: 50px;
  overflow: visible;
}

.nav-text {
  font-size: 24px;
  line-height: 80px;
  color: #c8cdd3;
  text-align: center;
  flex: none;
}

.nav-text.start {
  width: 121px;
}

.nav-text.song {
  width: 122px;
}

.song-tri {
  margin: 36px 8px 0 9px;
}

.nav-text.project {
  width: 128px;
}

/* arrangement */
.workspace {
  flex: none;
  height: 1780px;
  display: flex;
}

.arrange {
  width: 2815px;
  flex: none;
  box-sizing: border-box;
  padding: 7px 4px 8px 6px;
  background: #050607;
  display: flex;
  flex-direction: column;
}

.arr-head {
  height: 63px;
  flex: none;
  display: flex;
}

.head-tools {
  width: 658px;
  flex: none;
  background: #232830;
}

.head-icons {
  width: 658px;
  height: 63px;
  display: block;
}

.ruler {
  flex: 1;
  border-left: 2px solid #e2e4e6;
  display: flex;
  flex-direction: column;
}

.ruler-strip {
  height: 13px;
  background: #5f6c7e;
}

.ruler-body {
  flex: 1;
  display: flex;
  position: relative;
  color: #c4ccd5;
  font-size: 23px;
  background-color: #2f3a4a;
  background-image:
    linear-gradient(90deg, #aeb4bb 1px, transparent 1px),
    linear-gradient(90deg, #aeb4bb 1px, transparent 1px),
    linear-gradient(90deg, #aeb4bb 1px, transparent 1px);
  background-size:
    234.4px 18px,
    58.6px 8px,
    29.3px 3px;
  background-repeat: repeat-x;
  background-position: 0 100%;
}

.bar-num {
  width: 234.4px;
  flex: none;
  padding-left: 3px;
  box-sizing: border-box;
  line-height: 28px;
}

.bar-num:last-child {
  width: 34px;
}

.timesig {
  position: absolute;
  left: 3px;
  top: 26px;
  width: 31px;
  height: 22px;
  background: #6a727a;
  color: #fff;
  font-size: 19px;
  font-weight: 700;
  line-height: 22px;
}

.chord-row {
  height: 53px;
  margin-top: 3px;
  flex: none;
  display: flex;
}

.chord-label {
  width: 658px;
  flex: none;
  background: #2f3a4a;
  display: flex;
  align-items: center;
  position: relative;
  box-sizing: border-box;
  padding-left: 22px;
  font-size: 23px;
  color: #aeb4ba;
}

.chords-title {
  margin-top: -1px;
}

.follow {
  margin-left: 270px;
  margin-top: 6px;
  color: #dfe2e5;
  font-size: 24px;
}

.on-btn {
  margin-left: 15px;
  width: 79px;
  height: 34px;
  line-height: 34px;
  background: #2d99e3;
  text-align: center;
  color: #eaf4fb;
  font-size: 22px;
}

.a-btn {
  margin-left: 21px;
  width: 90px;
  height: 34px;
  line-height: 34px;
  background: #3d4754;
  padding-left: 9px;
  box-sizing: border-box;
  font-size: 22px;
  color: #aeb4ba;
}

.chord-lane {
  flex: 1;
  border-left: 2px solid #e2e4e6;
  background: #232730;
  display: flex;
  gap: 3px;
  align-items: flex-start;
  padding-right: 34px;
}

.chord {
  width: 231.4px;
  flex: none;
  height: 51px;
  line-height: 50px;
  font-size: 32px;
  padding-left: 18px;
  box-sizing: border-box;
}

.track-area {
  margin-top: 7px;
  padding-top: 1px;
  flex: 1;
  display: flex;
  flex-direction: column;
  gap: 2px;
  background: #2b323c;
  position: relative;
  min-height: 0;
}

.track-row {
  height: 232px;
  flex: none;
  display: flex;
}

.track-head {
  width: 658px;
  flex: none;
  display: flex;
}

.strip {
  width: 20px;
  flex: none;
  border-right: 2px solid #20262c;
  display: flex;
  flex-direction: column;
  justify-content: flex-end;
}

.auto-btn {
  height: 24px;
  background: rgba(0, 0, 0, 0.28);
  display: block;
}

.auto-btn svg {
  width: 20px;
  height: 24px;
  display: block;
}

.track-main {
  flex: 1;
  min-width: 0;
  padding: 4px 18px 0 0;
  box-sizing: border-box;
}

.track-top {
  display: flex;
  align-items: center;
  height: 46px;
}

.track-num {
  width: 48px;
  flex: none;
  text-align: center;
  font-size: 22px;
  font-weight: 700;
  color: #bdbdb6;
}

.msrm {
  width: 189px;
  height: 46px;
  flex: none;
  display: flex;
  box-sizing: border-box;
  border: 2px solid rgba(0, 0, 0, 0.7);
  border-radius: 5px;
}

.msr-btn {
  flex: 1;
  background: rgba(255, 255, 255, 0.13);
  border-right: 1px solid rgba(0, 0, 0, 0.45);
  display: flex;
  align-items: center;
  justify-content: center;
  font-size: 24px;
  color: #b9b8b2;
}

.msr-btn:last-child {
  border-right: none;
}

.rec-dot {
  width: 19px;
  height: 19px;
  border-radius: 50%;
  background: #c6c3bb;
}

.mon {
  width: 20px;
  height: 20px;
  color: #c6c3bb;
}

.track-name {
  margin-left: 13px;
  font-size: 25px;
  color: #bdbdbf;
  white-space: nowrap;
}

.track-type {
  margin-left: auto;
  width: 34px;
  height: 24px;
  color: #a5a49e;
  flex: none;
}

.fader {
  margin: 10px 0 0 48px;
  width: 409px;
  height: 6px;
  background: #1e2a3a;
}

.fader-fill {
  width: 310px;
  height: 6px;
  background: #75869a;
}

.selects {
  margin: 14px 0 0 48px;
  width: 409px;
  display: flex;
  flex-direction: column;
  gap: 2px;
}

.select-row {
  display: flex;
  gap: 2px;
  height: 32px;
}

.select {
  flex: 1;
  min-width: 0;
  display: flex;
  align-items: center;
  background: rgba(255, 255, 255, 0.11);
  padding: 0 8px 0 8px;
  color: #b3b2ac;
  font-size: 22.5px;
}

.select .tri {
  margin-left: auto;
  border-top-color: rgba(200, 200, 190, 0.65);
}

.sel-icon {
  width: 20px;
  height: 16px;
  flex: none;
  color: #b3b2ac;
}

.sel-text {
  margin-left: 12px;
  white-space: nowrap;
}

.sel-text.noicon {
  margin-left: 0;
  letter-spacing: 0.6px;
}

.sel-toggle {
  width: 47px;
  flex: none;
  background: rgba(255, 255, 255, 0.11);
  display: flex;
  align-items: center;
  justify-content: center;
  color: #b3b2ac;
}

.sel-toggle svg {
  width: 32px;
  height: 23px;
}

.track-side {
  width: 19px;
  flex: none;
  background: #2f3943;
}

.lane {
  flex: none;
  width: 2112px;
  margin-left: 2px;
  position: relative;
  background-color: #1c2122;
  background-image: repeating-linear-gradient(90deg, #2c3135 0 1px, transparent 1px 58.6px);
}

.clip {
  position: absolute;
  top: 0;
  height: 232px;
  box-shadow: inset 1px 0 0 rgba(0, 0, 0, 0.14);
}

.clip-fade {
  position: absolute;
  left: -14px;
  top: 0;
  width: 28px;
  height: 15px;
  z-index: 2;
  background: rgba(255, 255, 255, 0.35);
  clip-path: polygon(0 0, 100% 0, 50% 100%);
}

.clip-wave {
  position: absolute;
  left: 0;
  top: 0;
  display: block;
}

.note {
  position: absolute;
}

.clip-label {
  position: absolute;
  left: 0;
  top: 0;
  z-index: 3;
  height: 26px;
  line-height: 26px;
  padding: 0 20px 0 6px;
  font-size: 18px;
  letter-spacing: 2px;
  color: #f2f2f0;
  white-space: nowrap;
  clip-path: polygon(0 0, 100% 0, calc(100% - 14px) 100%, 0 100%);
  max-width: 100%;
  box-sizing: border-box;
  overflow: hidden;
}

.foot-bar {
  position: absolute;
  left: 0;
  right: 0;
  bottom: 0;
  height: 26px;
}

.foot-line {
  position: absolute;
  top: 0;
  bottom: 0;
  width: 1px;
}

.foot-text {
  position: absolute;
  top: 0;
  line-height: 26px;
  font-size: 21px;
  color: #b0aca2;
  white-space: nowrap;
}

.foot-tab {
  position: absolute;
  left: 0;
  bottom: 0;
  height: 26px;
  display: flex;
  align-items: center;
  z-index: 3;
  color: #bbb8ae;
}

.foot-tab.gear {
  width: 95px;
  clip-path: polygon(0 0, 84px 0, 95px 100%, 0 100%);
}

.foot-tab.note {
  width: 57px;
  clip-path: polygon(0 0, 44px 0, 57px 100%, 0 100%);
}

.foot-tab.pattern {
  width: 99px;
  clip-path: polygon(0 0, 85px 0, 99px 100%, 0 100%);
}

.ft-gear {
  width: 16px;
  height: 16px;
  margin-left: 12px;
}

.ft-gear + .ft-note {
  margin-left: 24px;
}

.ft-note {
  width: 24px;
  height: 24px;
  margin-left: 8px;
}

.ft-lines {
  width: 13px;
  height: 22px;
  margin-left: 14px;
}

.ft-ghost {
  width: 10px;
  height: 22px;
  margin-left: 32px;
}

.empty-row {
  flex: 1;
  display: flex;
}

.empty-left {
  width: 658px;
  flex: none;
  background: #2b323c;
}

.empty-lane {
  width: 2112px;
  flex: none;
  border-left: 2px solid #e2e4e6;
  background-color: #1c2122;
  background-image: repeating-linear-gradient(90deg, #2c3135 0 1px, transparent 1px 58.6px);
}

.track-area::after {
  content: '';
  position: absolute;
  right: 0;
  top: 0;
  bottom: 0;
  width: 33px;
  background: #232730;
}

.scroll-up,
.scroll-down {
  position: absolute;
  right: 8px;
  z-index: 2;
  width: 0;
  height: 0;
  border-left: 8px solid transparent;
  border-right: 8px solid transparent;
}

.scroll-up {
  top: 11px;
  border-bottom: 12px solid #70757c;
}

.scroll-down {
  bottom: 14px;
  border-top: 12px solid #70757c;
}

.arr-foot {
  height: 34px;
  flex: none;
  background: #232730;
  display: flex;
}

.foot-left {
  width: 658px;
  flex: none;
  display: flex;
  align-items: center;
  color: #c2c6ca;
  font-size: 21px;
}

.foot-cell {
  width: 96px;
  height: 34px;
  margin-right: 1px;
  background: #2a2d36;
  text-align: center;
  line-height: 36px;
  flex: none;
}

.medium {
  margin-left: 110px;
  font-size: 21px;
}

.medium-tri {
  margin-left: 110px;
}

.stack {
  margin-left: 27px;
  width: 16px;
  display: flex;
  flex-direction: column;
  gap: 2px;
}

.stack i {
  height: 4px;
  background: #70757c;
  display: block;
}

.foot-right {
  flex: 1;
  display: flex;
  align-items: center;
  position: relative;
}

.left-tri {
  margin-left: 14px;
  border-top: 9px solid transparent;
  border-bottom: 9px solid transparent;
  border-right: 12px solid #70757c;
}

.thumb {
  margin-left: 23px;
  width: 103px;
  height: 10px;
  margin-top: -6px;
  background: #777b80;
}

.right-tri {
  margin-left: auto;
  border-top: 9px solid transparent;
  border-bottom: 9px solid transparent;
  border-left: 10px solid #70757c;
}

.zoom-widget {
  margin-left: 17px;
  width: 252px;
  height: 34px;
  flex: none;
}

/* browser */
.browser {
  flex: 1;
  margin-top: 2px;
  margin-bottom: 2px;
  border: 6px solid #2c7aa8;
  border-top-width: 4px;
  border-bottom-width: 4px;
  background: #232730;
  display: flex;
  flex-direction: column;
  box-shadow: inset 0 2px 0 #000;
  min-height: 0;
}

.br-tabs {
  margin-top: 3px;
  height: 71px;
  display: flex;
  flex: none;
  background: #364558;
}

.br-home {
  width: 48px;
  flex: none;
  display: flex;
  justify-content: center;
  padding-top: 16px;
  box-sizing: border-box;
}

.br-home svg {
  width: 26px;
  height: 26px;
}

.br-tab-row {
  flex: 1;
  height: 59px;
  background: #222630;
  border-bottom: 2px solid #000;
  display: flex;
  align-items: center;
  padding-left: 14px;
  box-sizing: content-box;
  position: relative;
}

.br-tab {
  font-size: 23px;
  color: #c0c3c7;
  white-space: nowrap;
  margin-right: 30px;
}

.br-search {
  position: absolute;
  left: 589px;
  top: 16px;
  width: 28px;
  height: 26px;
}

.br-list {
  flex: none;
  padding: 58px 0 0 41px;
  display: flex;
  flex-direction: column;
  gap: 72px;
}

.br-item {
  display: flex;
  height: 64px;
}

.br-icon {
  width: 64px;
  height: 64px;
  flex: none;
  border-radius: 4px;
  overflow: hidden;
}

.br-icon svg {
  width: 64px;
  height: 64px;
  display: block;
}

.br-icon.fx {
  background: #4a4f58;
  color: #ddd;
  font-size: 36px;
  font-weight: 700;
  text-align: center;
  line-height: 64px;
}

.br-icon.loops,
.br-icon.pool {
  background: #7b8da8;
}

.br-icon.cloud {
  background: #4a4f58;
}

.br-text {
  margin-left: 43px;
}

.br-title {
  font-family: 'Roboto', 'Liberation Sans', sans-serif;
  font-weight: 300;
  font-size: 31px;
  line-height: 34px;
  margin-top: -6px;
  color: #e8e9ea;
}

.br-desc {
  margin-top: 18px;
  line-height: 26px;
  font-size: 22.5px;
  color: #bcbec1;
}

.br-buttons {
  margin-top: auto;
  padding: 0 0 45px 157px;
  display: flex;
  flex-direction: column;
  gap: 20px;
}

.br-btn {
  width: 360px;
  height: 48px;
  border: none;
  background: #454c56;
  box-shadow: inset 0 -2px 0 #3a4049;
  font-family: inherit;
  font-size: 24px;
  color: #c4c6c9;
  padding: 0;
}

/* transport */
.transport {
  flex: 1;
  display: flex;
  background: linear-gradient(#4f6178 0 87px, #3a4658 87px);
  border-radius: 0 0 10px 10px;
  overflow: hidden;
}

.tp-black {
  width: 2790px;
  height: 87px;
  margin-left: 183px;
  flex: none;
  display: flex;
  background: #121212;
  border-bottom: 3px solid #85888b;
  box-sizing: border-box;
  clip-path: polygon(0 0, 100% 0, calc(100% - 25px) 100%, 17px 100%);
  color: #dfe2e5;
}

.tp {
  flex: none;
}

.val {
  margin-top: 5px;
  height: 46px;
  line-height: 46px;
  font-size: 26px;
  white-space: nowrap;
  color: #dfe2e5;
}

.val.big {
  font-size: 38px;
  font-weight: 700;
  text-align: center;
  letter-spacing: 0.8px;
}

.lab {
  height: 18px;
  line-height: 18px;
  font-size: 22px;
  color: #9fa3a7;
  white-space: nowrap;
}

.val + .lab {
  margin-top: 0;
}

.lab.bright {
  color: #dfe2e5;
}

.center {
  text-align: center;
}

.midi {
  margin-left: 27px;
  width: 64px;
  text-align: center;
}

.midi-ic {
  width: 64px;
  height: 52px;
  display: block;
}

.perf {
  margin-left: 16px;
  width: 129px;
}

.perf-bars {
  height: 51px;
  padding-top: 16px;
  box-sizing: border-box;
  display: flex;
  flex-direction: column;
  gap: 4px;
}

.perf-bar {
  height: 10px;
  background: #2c3238;
}

.perf-bar i {
  display: block;
  width: 6px;
  height: 10px;
  background: #57b7e4;
}

.perf .lab {
  font-size: 22.5px;
  margin-left: 3px;
}

.spinner {
  margin: 20px 0 0 35px;
  width: 44px;
  height: 44px;
}

.sr {
  margin-left: 30px;
  width: 136px;
}

.rec {
  width: 173px;
}

.sec {
  width: 163px;
}

.sec .val {
  letter-spacing: 0.6px;
}

.sec .lab {
  padding-right: 18px;
}

.bars {
  margin-left: 52px;
  width: 274px;
}

.bars .lab {
  padding-right: 14px;
}

.controls {
  margin-left: 26px;
  width: 590px;
  height: 84px;
}

.lr {
  width: 36px;
  display: flex;
  flex-direction: column;
  font-weight: 700;
  font-size: 29px;
  color: #5f88b3;
  text-align: center;
  line-height: 30px;
  padding-top: 9px;
}

.times {
  margin-left: 10px;
  width: 195px;
  display: flex;
  flex-direction: column;
  font-size: 26px;
  letter-spacing: 0.5px;
  color: #dfe2e5;
  line-height: 29px;
  padding-top: 11px;
  white-space: nowrap;
}

.met {
  margin-left: 24px;
  width: 225px;
  height: 84px;
}

.met-label {
  font-size: 22px;
  fill: #9fa3a7;
  font-family: 'Liberation Sans', Arial, sans-serif;
}

.timing {
  margin-left: 20px;
  width: 85px;
}

.key {
  margin-left: 5px;
  width: 86px;
}

.tempo {
  width: 100px;
}

.meters {
  margin-left: 24px;
  width: 181px;
  height: 84px;
}

.tp-tabs {
  flex: 1;
  display: flex;
  justify-content: flex-end;
  margin-left: -2px;
}

.tp-tab {
  width: 112px;
  height: 87px;
  border-left: 1px solid #33404f;
  box-sizing: border-box;
  text-align: center;
  line-height: 88px;
  font-size: 24px;
  color: #d6d9dd;
  flex: none;
}

.tp-tab.active {
  width: 130px;
  background: #2d99e3;
  color: #fff;
  box-shadow: 0 12px 0 #17567f;
}
</style>

<style>
html,
body {
  margin: 0;
  background: #fff;
  overflow: hidden;
}
</style>
